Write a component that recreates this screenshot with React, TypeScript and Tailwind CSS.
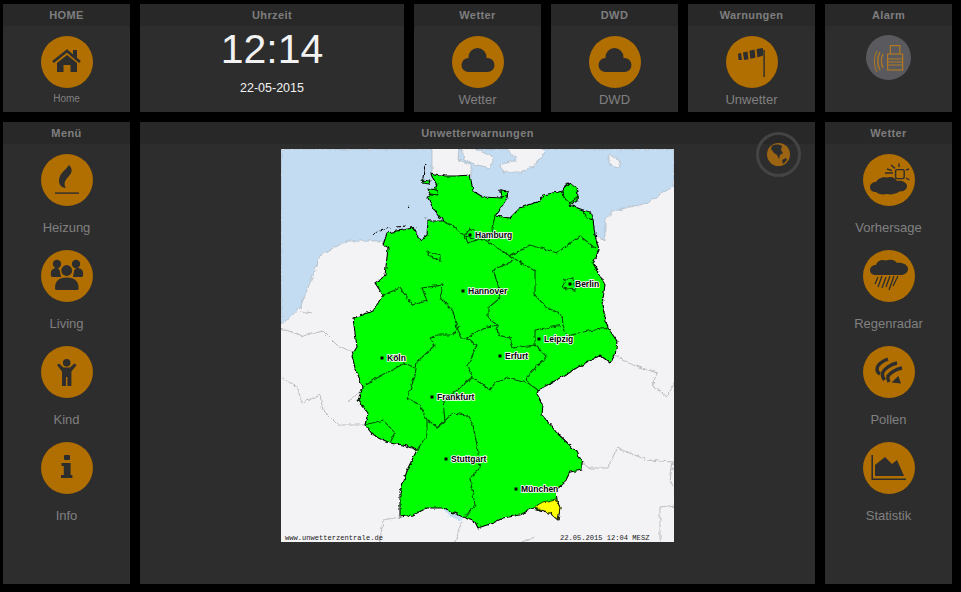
import { FC, ReactNode } from 'react';

const dark = '#2d2d2d';

const HomeIcon = () => (
  <g fill={dark}>
    <path d="M32 14h4v8l-4-3z" />
    <path d="M12 26 L26 15 L39 26" fill="none" stroke={dark} strokeWidth="2.6" />
    <path fillRule="evenodd" d="M26 19 L36 27 V36 H29.5 V29 H22.5 V36 H16 V27 Z" />
  </g>
);

const CloudIcon = () => (
  <g fill={dark}>
    <circle cx="25.5" cy="21" r="9" />
    <circle cx="16.5" cy="29" r="7" />
    <circle cx="35.5" cy="29" r="7" />
    <rect x="16" y="26" width="20" height="10" />
  </g>
);

const WindsockIcon = () => (
  <g fill={dark}>
    <rect x="37.4" y="14" width="1.4" height="27" />
    <path d="M37 12 L30.6 13 L31.4 21.4 L37 19.4 Z" />
    <path d="M28.6 13.6 L23.4 14.8 L24.4 22.8 L29.4 21.8 Z" />
    <path d="M21.4 15.4 L17 16.6 L18 24 L22.4 23.2 Z" />
    <path d="M15 17 L12 17.8 L12.6 24 L16 24 Z" />
  </g>
);

const AlarmIcon = () => (
  <g fill="none" stroke="#b07820" strokeWidth="1.2">
    <rect x="21.6" y="19" width="15" height="16" />
    <path d="M24.4 19 V10.6 H33.8 V19" />
    <path d="M21.6 24 H36.6 M21.6 27 H36.6 M21.6 30 H36.6" strokeWidth="1" />
    <path d="M17 19 C15 23 15 29 17 33" strokeWidth="1.4" />
    <path d="M14 17 C11 22 11 30 14 35" strokeWidth="1.4" />
    <path d="M11 16 C7.5 22 7.5 30 11 37" strokeWidth="1" />
  </g>
);

const FlameIcon = () => (
  <g fill={dark}>
    <path d="M28 11 C25 16 18 19 18 27 C18 31 21 34 25 34 C22 30 24 26 28 22 C31 19 32 15 28 11 Z" />
    <rect x="14" y="38.4" width="24" height="1.4" />
  </g>
);

const PeopleIcon = () => (
  <g fill={dark}>
    <circle cx="16" cy="14" r="4.2" />
    <circle cx="35" cy="14" r="4.2" />
    <path d="M10 26 C9 20 12 18 16 18 C17 18 19 20 19 21 L20 27 H11 Z" />
    <path d="M42 26 C43 20 40 18 36 18 C35 18 33 20 33 21 L32 27 H41 Z" />
    <circle cx="25.7" cy="20.5" r="7" fill="#b06f00" />
    <circle cx="25.7" cy="20.5" r="5.4" />
    <path d="M14 38 C14 30 19 27.4 25.7 27.4 C32 27.4 37.6 30 37.6 38 C37.6 39.4 37 40 35.6 40 H16 C14.6 40 14 39.4 14 38 Z" />
  </g>
);

const KidIcon = () => (
  <g fill={dark}>
    <circle cx="25.7" cy="16.8" r="3.8" />
    <path d="M16 19 L18 17.4 L22.4 21.4 H29 L33.4 17.4 L35.6 19 L30.4 25.6 V40 H26.4 V31 H25 V40 H21 V25.6 Z" />
  </g>
);

const InfoIcon = () => (
  <g fill={dark}>
    <rect x="23" y="13" width="6" height="5" rx="1" />
    <path d="M20.6 21 H29.6 V33 H31.4 V36 H20 V33 H22.8 V24 H20.6 Z" />
  </g>
);

const ForecastIcon = () => (
  <g>
    <path
      fill={dark}
      d="M7 33 C7 30 10 28 13 28 C15 24 20 22.6 24 23.6 C28 22 33 24 34 27 C38 26 44 28 44 32 C44 36 40 37.6 36 37.6 C34 40 28 41 24 40 C19 41 15 40 13 38 C9 38 7 36 7 33 Z"
    />
    <g fill="none" stroke={dark} strokeWidth="1.4">
      <rect x="32.6" y="15.6" width="8.6" height="9" rx="1.5" />
      <path d="M22 19 H30 M28 11 L32 14.4 M36 9.6 V13 M43 16 L46 15 M43 24 L46.4 26 M24 15 L29 16.6" />
    </g>
  </g>
);

const RainIcon = () => (
  <g>
    <path
      fill={dark}
      d="M7 20 C7 17 10 15 13 15 C14 11 19 9 23 10.6 C27 8.6 33 10 34 13 C38 12 45 14 45 19 C45 23 41 25 37 25 H13 C9 25 7 23 7 20 Z"
    />
    <path
      d="M15 27 L12 34 M19 26 L15 37 M23 27 L19 38 M27 26 L23 37 M31 26 L26 40 M35 26 L30 36"
      stroke={dark}
      strokeWidth="1.3"
      fill="none"
    />
  </g>
);

const PollenIcon = () => (
  <g fill="none" stroke={dark}>
    <path d="M25 13 C19 15 14 19 14 23 C14 25 15 27 17 28" strokeWidth="3.4" />
    <path d="M34 17 C28 18 21 23 19.5 27 C19 30 20 32 21.5 34" strokeWidth="3.4" />
    <path d="M39 22 C33 23 27 27 25 30 C24.5 32 25 34 26 36" strokeWidth="3.4" />
    <path d="M28.6 36.4 L35.4 30 L38 37.6 Z" fill={dark} stroke="none" />
  </g>
);

const StatsIcon = () => (
  <g fill={dark}>
    <path d="M8.4 13 H10 V36.4 H43 V38 H8.4 Z" />
    <path d="M12 34 V23 L22 15 L29 22 L34 18 L41 34 Z" />
  </g>
);

const GlobeIcon = () => (
  <svg width="23" height="23" viewBox="0 0 23 23">
    <circle cx="11.5" cy="11.5" r="11.5" fill="#9b6412" />
    <path
      fill={dark}
      d="M5 3 C8 1 13 1 15 3 L14 7 L16 10 L13 12 L12 16 L10 12 L7 10 L4 6 Z M15 17 L19 15 L20 17 L16 21 Z"
    />
  </svg>
);

const Disc: FC<{ children: ReactNode }> = ({ children }) => (
  <svg width="52" height="52" viewBox="0 0 52 52" className="shrink-0">
    <circle cx="26" cy="26" r="26" fill="#b06f00" />
    {children}
  </svg>
);

const Panel: FC<{ title: string; className?: string; children: ReactNode }> = ({ title, className, children }) => (
  <section className={`relative flex flex-col bg-[#2d2d2d] ${className ?? ''}`}>
    <h2 className="h-[22px] shrink-0 bg-[#282828] text-center text-[11px] font-bold leading-[22px] tracking-[0.4px] text-[#7e7e7e]">
      {title}
    </h2>
    {children}
  </section>
);

const Tile: FC<{ title: string; label: string; icon: ReactNode; small?: boolean }> = ({ title, label, icon, small }) => (
  <Panel title={title} className="h-[108px] w-[127px]">
    <div className="flex flex-col items-center pt-[10px]">
      <Disc>{icon}</Disc>
      <span className={small ? 'mt-[5px] text-[10px] leading-[12px] text-[#808080]' : 'mt-[3px] text-[13px] leading-[17px] text-[#808080]'}>
        {label}
      </span>
    </div>
  </Panel>
);

const SideMenu: FC<{ title: string; items: { label: string; icon: ReactNode }[] }> = ({ title, items }) => (
  <Panel title={title} className="h-[462px] w-[127px]">
    <div className="flex flex-col items-center pt-[10px]">
      {items.map((item) => (
        <div key={item.label} className="flex h-[96px] flex-col items-center">
          <Disc>{item.icon}</Disc>
          <span className="mt-[13px] text-[13px] leading-[17px] text-[#808080]">{item.label}</span>
        </div>
      ))}
    </div>
  </Panel>
);

const germany =
  'M430 173 L445 176 L457 176 L470 175 L473 191 L483 197 L502 198 L500 190 L508 191 L507 198 L502 206 L495 216 L510 218 L520 208 L540 201 L543 195 L563 191 L567 183 L578 190 L577 201 L570 205 L583 210 L593 220 L595 235 L599 250 L593 263 L605 285 L602 305 L608 328 L617 341 L615 355 L610 363 L600 355 L587 362 L573 370 L553 382 L538 390 L537 394 L543 405 L542 415 L557 433 L577 452 L582 462 L582 470 L570 472 L565 482 L556 490 L557 500 L560 508 L558 520 L550 513 L533 508 L520 515 L503 518 L493 523 L478 528 L475 522 L463 517 L443 508 L427 508 L413 515 L400 517 L400 492 L408 468 L417 450 L403 445 L390 443 L373 435 L365 425 L368 413 L358 400 L363 387 L355 368 L352 355 L357 347 L353 318 L373 311 L383 295 L375 283 L385 276 L388 248 L383 245 L387 233 L413 228 L420 241 L427 235 L428 221 L443 221 L433 208 L428 198 L437 185 Z';

const borders = [
  'M443 221 L453 226 L465 236 L487 241 L510 256',
  'M465 236 L470 228 L477 231 L477 240 L468 243 Z',
  'M495 216 L492 228 L493 236 L487 241',
  'M510 256 L530 245 L557 253 L580 236 L595 248',
  'M513 261 L493 270 L498 285 L500 298 L488 308 L488 318 L497 325 L498 335 L510 338 L513 348',
  'M510 256 L535 271 L535 295 L547 308 L562 315 L563 325',
  'M562 288 L565 280 L573 278 L575 290 Z',
  'M535 330 L563 325 L567 336 L588 331 L608 328',
  'M535 330 L535 345 L547 357 L538 365 L527 377 L528 383 L538 390',
  'M513 348 L535 345',
  'M467 338 L483 328 L497 325',
  'M467 338 L477 345 L468 365 L472 377 L490 390 L495 383 L508 378 L527 383',
  'M400 288 L412 305 L427 301 L422 288 L443 285 L440 298 L453 311 L457 328 L462 338 L467 338',
  'M383 295 L400 288',
  'M430 338 L437 335 L453 335 L460 325',
  'M430 338 L435 345 L417 362 L415 375 L407 398 L420 405 L427 420 L435 425 L437 428 L453 413 L467 415 L473 425',
  'M472 377 L455 392 L443 400 L445 422 L437 428',
  'M473 425 L477 445 L480 468 L470 478 L475 505 L465 517',
  'M427 420 L427 435 L417 450',
  'M365 385 L377 378 L405 363 L415 368',
  'M365 425 L383 420 L395 433 L390 443',
  'M427 251 L440 255 L440 261 L430 256 Z',
];

const greyLines = [
  'M615 355 L633 365 L657 373 L652 385 L667 397 L675 382',
  'M582 462 L590 468 L608 468 L617 448 L647 460 L673 462 L670 480 L675 490',
  'M660 542 L660 508 L675 506',
  'M282 378 L297 387 L302 403 L320 395 L323 410 L338 425 L365 425',
  'M347 402 L357 395 L363 387',
  'M280 328 L303 336 L323 331 L337 345 L352 352',
  'M300 311 L312 313',
  'M400 517 L383 520 L380 542',
  'M455 542 L462 522',
  'M522 542 L535 537',
];

const cities = [
  { name: 'Hamburg', x: 470, y: 235 },
  { name: 'Hannover', x: 463, y: 291 },
  { name: 'Berlin', x: 570, y: 284 },
  { name: 'Leipzig', x: 539, y: 339 },
  { name: 'Köln', x: 382, y: 358 },
  { name: 'Erfurt', x: 500, y: 356 },
  { name: 'Frankfurt', x: 432, y: 397 },
  { name: 'Stuttgart', x: 446, y: 459 },
  { name: 'München', x: 516, y: 489 },
];

const WarningMap = () => (
  <svg width="393" height="393" viewBox="281 149 393 393" className="block">
    <defs>
      {/* roughens the hand traced outlines so they read like real borders */}
      <filter id="rough" x="-5%" y="-5%" width="110%" height="110%">
        <feTurbulence type="fractalNoise" baseFrequency="0.22" numOctaves="2" seed="4" />
        <feDisplacementMap in="SourceGraphic" scale="4" xChannelSelector="R" yChannelSelector="G" />
      </filter>
    </defs>
    <rect x="281" y="149" width="393" height="393" fill="#f3f3f6" />
    <g filter="url(#rough)">
      <path
        d="M281 149 H674 V186 L647 203 L613 211 L605 220 L605 241 L595 235 L560 260 L440 260 L380 241 L347 241 L320 255 L317 265 L300 308 L281 325 Z"
        fill="#c3dcf1"
        stroke="#aab4bd"
        strokeWidth="0.7"
      />
      <g fill="#f3f3f6" stroke="#aab4bd" strokeWidth="0.7">
        <path d="M432 147 H459 L458 160 L471 164 L471 178 L432 178 Z" />
        <path d="M462 147 L478 150 L494 158 L490 168 L474 164 L464 160 Z" />
        <path d="M505 147 L540 147 L545 152 L534 166 L520 172 L503 172 L500 165 L517 160 Z" />
        <path d="M609 155 L620 161 L618 168 L609 163 Z" />
      </g>
      <g fill="none" stroke="#b4b4ba" strokeWidth="0.9">
        {greyLines.map((d) => (
          <path key={d} d={d} />
        ))}
      </g>
      <path d="M443 508 L463 518 L461 521 L449 516 Z" fill="#c3dcf1" />
      <path d={germany} fill="#00ff00" stroke="#000" strokeWidth="1.1" strokeLinejoin="round" />
      <path d="M534 507 L543 502 L556 499 L560 508 L558 520 L550 513 Z" fill="#ffff00" stroke="#000" strokeWidth="0.7" />
      <g fill="none" stroke="#064f06" strokeWidth="1.1">
        {borders.map((d) => (
          <path key={d} d={d} />
        ))}
      </g>
      <g fill="#00ff00" stroke="#000" strokeWidth="0.9">
        <path d="M563 190 L570 183 L577 189 L578 197 L570 203 L564 198 Z" />
        <path d="M583 210 L590 212 L593 220 L587 218 Z" />
        <path d="M500 190 L508 191 L507 197 L501 196 Z" />
        <path d="M422 180 L430 181 L429 184 L423 183 Z" />
        <path d="M428 188 L436 190 L438 195 L430 194 Z" />
      </g>
      <g fill="none" stroke="#000" strokeWidth="1.1">
        <path d="M373 234 L385 229 L392 228 M396 227 L406 226 M410 227 L417 228" strokeDasharray="5 1.5" />
        <path d="M423 178 L424 170 L426 165" />
        <path d="M409 206 L410 207 M425 217 L426 218" />
      </g>
    </g>
    {cities.map((c) => (
      <g key={c.name}>
        <rect x={c.x - 1.5} y={c.y - 1.5} width="3" height="3" fill="#000" />
        <text
          x={c.x + 5}
          y={c.y + 3}
          fontFamily="'Liberation Sans', sans-serif"
          fontWeight="700"
          fontSize="8.5"
          fill="#000"
          stroke="#fff"
          strokeWidth="1.6"
          paintOrder="stroke"
        >
          {c.name}
        </text>
      </g>
    ))}
    <text x="285" y="540" fontFamily="'Liberation Mono', monospace" fontSize="7.1" fill="#222">
      www.unwetterzentrale.de
    </text>
    <text x="560" y="540" fontFamily="'Liberation Mono', monospace" fontSize="7.1" fill="#222">
      22.05.2015 12:04 MESZ
    </text>
  </svg>
);

const menuItems = [
  { label: 'Heizung', icon: <FlameIcon /> },
  { label: 'Living', icon: <PeopleIcon /> },
  { label: 'Kind', icon: <KidIcon /> },
  { label: 'Info', icon: <InfoIcon /> },
];

const weatherItems = [
  { label: 'Vorhersage', icon: <ForecastIcon /> },
  { label: 'Regenradar', icon: <RainIcon /> },
  { label: 'Pollen', icon: <PollenIcon /> },
  { label: 'Statistik', icon: <StatsIcon /> },
];

export default function App() {
  return (
    <div className="flex h-[592px] w-[961px] flex-col gap-[10px] overflow-hidden bg-black pl-[3px] pt-[4px] font-['Liberation_Sans',Arial,sans-serif]">
      <div className="flex gap-[10px]">
        <Tile title="HOME" label="Home" icon={<HomeIcon />} small />
        <Panel title="Uhrzeit" className="h-[108px] w-[264px]">
          <div className="flex flex-col items-center text-[#f2f2f2]">
            <span className="mt-[-2px] text-[41px] leading-[50px]">12:14</span>
            <span className="mt-[6px] text-[12.5px] leading-[16px]">22-05-2015</span>
          </div>
        </Panel>
        <Tile title="Wetter" label="Wetter" icon={<CloudIcon />} />
        <Tile title="DWD" label="DWD" icon={<CloudIcon />} />
        <Tile title="Warnungen" label="Unwetter" icon={<WindsockIcon />} />
        <Panel title="Alarm" className="h-[108px] w-[127px]">
          <div className="flex justify-center pt-[9px]">
            <svg width="45" height="45" viewBox="0 0 45 45">
              <circle cx="22.5" cy="22.5" r="22.5" fill="#5a5a5e" />
              <AlarmIcon />
            </svg>
          </div>
        </Panel>
      </div>
      <div className="flex gap-[10px]">
        <SideMenu title="Menü" items={menuItems} />
        <Panel title="Unwetterwarnungen" className="h-[462px] w-[675px]">
          <div className="flex justify-center pt-[5px]">
            <WarningMap />
          </div>
          <div className="absolute right-[14px] top-[10px] flex h-[45px] w-[45px] items-center justify-center rounded-full border-[3px] border-[#444444]">
            <GlobeIcon />
          </div>
        </Panel>
        <SideMenu title="Wetter" items={weatherItems} />
      </div>
    </div>
  );
}
